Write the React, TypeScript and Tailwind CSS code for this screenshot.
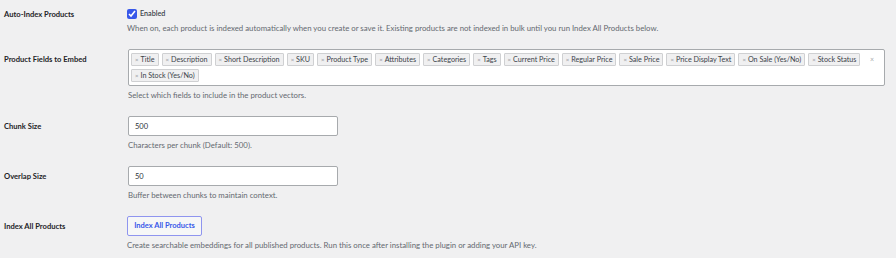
import { useState } from 'react';

const FIELDS = [
  'Title',
  'Description',
  'Short Description',
  'SKU',
  'Product Type',
  'Attributes',
  'Categories',
  'Tags',
  'Current Price',
  'Regular Price',
  'Sale Price',
  'Price Display Text',
  'On Sale (Yes/No)',
  'Stock Status',
  'In Stock (Yes/No)',
];

const font = { fontFamily: 'Lato, "Open Sans", Arial, sans-serif' };

function Label({ children, className = '' }: { children: React.ReactNode; className?: string }) {
  return (
    <div className={`w-[124px] shrink-0 pl-[4px] text-[7.6px] font-bold text-[#1d2327] ${className}`}>
      {children}
    </div>
  );
}

function Description({ children }: { children: React.ReactNode }) {
  return <p className="mt-[4px] text-[7.8px] leading-[10px] text-[#646970]">{children}</p>;
}

export default function App() {
  const [enabled, setEnabled] = useState(true);
  const [fields, setFields] = useState(FIELDS);
  const [chunk, setChunk] = useState('500');
  const [overlap, setOverlap] = useState('50');

  return (
    <div className="h-[258px] w-[896px] overflow-hidden bg-[#f0f0f1] pt-[9px] leading-[10px]" style={font}>
      {/* Auto-index */}
      <div className="flex items-start">
        <Label className="leading-[10px]">Auto-Index Products</Label>
        <div className="pl-[3px]">
          <label className="flex h-[10px] items-center gap-[3px] text-[7.2px] font-semibold text-[#3c434a]">
            <input
              type="checkbox"
              checked={enabled}
              onChange={(e) => setEnabled(e.target.checked)}
              className="m-0 block h-[10px] w-[10px] accent-[#3858e9]"
            />
            Enabled
          </label>
          <Description>
            When on, each product is indexed automatically when you create or save it. Existing
            products are not indexed in bulk until you run Index All Products below.
          </Description>
        </div>
      </div>

      {/* Fields */}
      <div className="mt-[16px] flex items-start">
        <Label className="pt-[5px] leading-[10px]">Product Fields to Embed</Label>
        <div className="pl-[4px]">
          <div className="relative w-[757px] rounded-[2px] border border-[#a7aaad] bg-white pb-[3px] pl-[2px] pr-[12px] pt-[3px]">
            <div className="flex flex-wrap gap-[3px]">
              {fields.map((f) => (
                <span
                  key={f}
                  className="flex h-[13px] items-center rounded-[1px] border border-[#cfd0d2] bg-[#f0f0f1] px-[3px] text-[7.2px] text-[#3c434a]"
                >
                  <button
                    type="button"
                    onClick={() => setFields(fields.filter((x) => x !== f))}
                    className="mr-[2px] text-[6px] leading-[10px] text-[#8c8f94]"
                  >
                    ×
                  </button>
                  {f}
                </span>
              ))}
            </div>
            <button
              type="button"
              onClick={() => setFields([])}
              className="absolute right-[10px] top-[4px] text-[7px] text-[#a7aaad]"
            >
              ×
            </button>
          </div>
          <Description>Select which fields to include in the product vectors.</Description>
        </div>
      </div>

      {/* Chunk size */}
      <div className="mt-[16px] flex items-start">
        <Label className="leading-[20px]">Chunk Size</Label>
        <div className="pl-[4px]">
          <input
            value={chunk}
            onChange={(e) => setChunk(e.target.value)}
            className="block h-[20px] w-[210px] rounded-[2px] border border-[#a7aaad] bg-white px-[6px] text-[7.5px] text-[#2c3338] outline-none"
          />
          <Description>Characters per chunk (Default: 500).</Description>
        </div>
      </div>

      {/* Overlap */}
      <div className="mt-[16px] flex items-start">
        <Label className="leading-[20px]">Overlap Size</Label>
        <div className="pl-[4px]">
          <input
            value={overlap}
            onChange={(e) => setOverlap(e.target.value)}
            className="block h-[20px] w-[210px] rounded-[2px] border border-[#a7aaad] bg-white px-[6px] text-[7.5px] text-[#2c3338] outline-none"
          />
          <Description>Buffer between chunks to maintain context.</Description>
        </div>
      </div>

      {/* Index all */}
      <div className="mt-[16px] flex items-start">
        <Label className="leading-[20px]">Index All Products</Label>
        <div className="pl-[3px]">
          <button
            type="button"
            className="block h-[20px] w-[75px] rounded-[2px] border border-[#8f95ef] bg-[#f6f7f7] text-[7.5px] font-bold text-[#3858e9]"
          >
            Index All Products
          </button>
          <Description>
            Create searchable embeddings for all published products. Run this once after installing
            the plugin or adding your API key.
          </Description>
        </div>
      </div>
    </div>
  );
}
